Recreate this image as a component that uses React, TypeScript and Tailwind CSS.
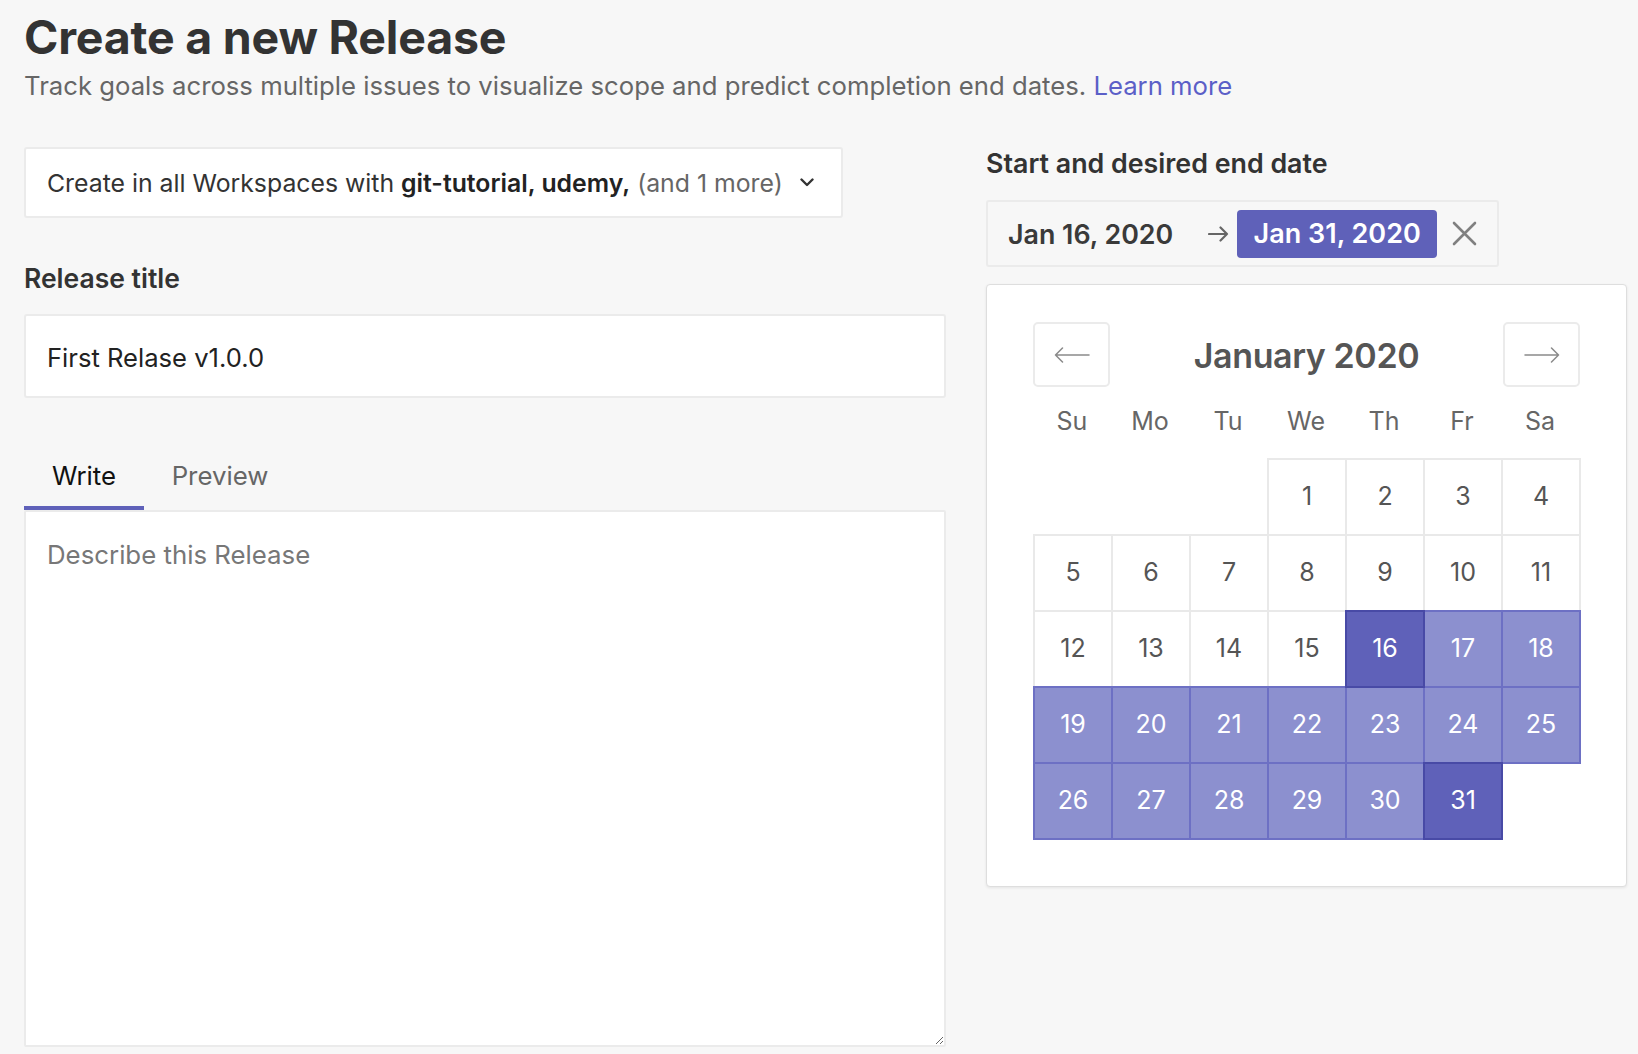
import React from "react";

const FONT = { fontFamily: "Inter, 'Noto Sans', 'Liberation Sans', sans-serif" };

function ArrowLeft() {
  return (
    <svg width="36" height="16" viewBox="0 0 36 16" fill="none">
      <path d="M35 8H1.5M8.5 1L1.5 8L8.5 15" stroke="#8a8a8a" strokeWidth="1.5" strokeLinecap="round" strokeLinejoin="round" />
    </svg>
  );
}

function ArrowRight() {
  return (
    <svg width="36" height="16" viewBox="0 0 36 16" fill="none">
      <path d="M1 8H34.5M27.5 1L34.5 8L27.5 15" stroke="#8a8a8a" strokeWidth="1.5" strokeLinecap="round" strokeLinejoin="round" />
    </svg>
  );
}

function SmallArrow() {
  return (
    <svg width="21" height="16" viewBox="0 0 21 16" fill="none">
      <path d="M1 8H19M12.5 1.5L19 8L12.5 14.5" stroke="#666" strokeWidth="2.2" strokeLinecap="round" strokeLinejoin="round" />
    </svg>
  );
}

function XIcon() {
  return (
    <svg width="25" height="25" viewBox="0 0 25 25" fill="none">
      <path d="M2 2L23 23M23 2L2 23" stroke="#808080" strokeWidth="2.6" strokeLinecap="round" />
    </svg>
  );
}

function Chevron() {
  return (
    <svg width="14" height="9" viewBox="0 0 14 9" fill="none">
      <path d="M1.5 1.5L7 7L12.5 1.5" stroke="#333" strokeWidth="2.4" strokeLinecap="round" strokeLinejoin="round" />
    </svg>
  );
}

const START = 16;
const END = 31;

function DayCell({ day }: { day: number | null }) {
  if (day === null) {
    return <div className="-ml-px -mt-px" />;
  }
  const isEdge = day === START || day === END;
  const inRange = day > START && day < END;
  let cls = "border-[#e9e9e9] bg-white text-[#555]";
  if (isEdge) cls = "z-20 border-[#484aa6] bg-[#5f61b9] text-white";
  else if (inRange) cls = "z-10 border-[#6d70c4] bg-[#8c90cf] text-white";
  return (
    <div className={`relative -ml-[2px] -mt-[2px] flex items-center justify-center border-2 text-[25px] ${cls}`}>
      {day}
    </div>
  );
}

export default function App() {
  const cells: (number | null)[] = [null, null, null];
  for (let d = 1; d <= 31; d++) cells.push(d);
  cells.push(null);

  return (
    <div className="min-h-screen bg-[#f7f7f7] pl-[24px] pt-[11px]" style={FONT}>
      <h1 className="text-[46.5px] font-bold leading-[52px] tracking-[-0.2px] text-[#333]">Create a new Release</h1>
      <p className="mt-[7px] text-[25.7px] leading-[32px] text-[#666]">
        Track goals across multiple issues to visualize scope and predict completion end dates.{" "}
        <a className="text-[#5b5fc7]">Learn more</a>
      </p>

      <div className="mt-[45px] flex gap-[40px]">
        {/* Left column */}
        <div className="flex w-[922px] flex-col">
          <div className="flex h-[71px] w-[819px] items-center rounded-[3px] border-2 border-[#ebebeb] bg-white pl-[21px] text-[24.8px] leading-[32px] text-[#333]">
            <span>
              Create in all Workspaces with <span className="font-semibold text-[#222]">git-tutorial, udemy,</span>{" "}
              <span className="text-[#666]">(and 1 more)</span>
            </span>
            <span className="ml-[17px] flex items-center">
              <Chevron />
            </span>
          </div>

          <div className="mt-[44px] text-[26.5px] font-semibold leading-[32px] text-[#333]">Release title</div>

          <input
            className="mt-[20px] h-[84px] w-[922px] rounded-[3px] border-2 border-[#ebebeb] bg-white pl-[21px] pt-[3px] text-[25.6px] text-[#222] outline-none"
            defaultValue="First Relase v1.0.0"
            style={FONT}
          />

          <div className="mt-[62px] flex">
            <div className="w-[120px] border-b-4 border-[#5f61b9] pb-[14px] text-center text-[25.8px] leading-[32px] text-[#111]">
              Write
            </div>
            <div className="w-[152px] border-b-4 border-transparent pb-[14px] text-center text-[25.8px] leading-[32px] text-[#666]">
              Preview
            </div>
          </div>

          <textarea
            className="h-[537px] w-[922px] rounded-[2px] border-2 border-[#ebebeb] bg-white px-[21px] pt-[27px] text-[25.8px] leading-[32px] text-[#222] outline-none placeholder:text-[#777]"
            placeholder="Describe this Release"
            style={FONT}
          />
        </div>

        {/* Right column */}
        <div className="flex w-[641px] flex-col">
          <div className="text-[26.8px] font-semibold leading-[32px] text-[#333]">Start and desired end date</div>

          <div className="mt-[21px] flex h-[67px] w-[513px] items-center rounded-[3px] border-2 border-[#ebebeb] pl-[20px]">
            <span className="text-[26.8px] font-semibold leading-[32px] text-[#3a3a3a]">Jan 16, 2020</span>
            <span className="ml-[35px] flex items-center">
              <SmallArrow />
            </span>
            <span className="ml-[8px] flex h-[48px] w-[200px] items-center justify-center rounded-[4px] bg-[#5f61b9] text-[27px] font-semibold leading-[32px] text-white">
              Jan 31, 2020
            </span>
            <span className="ml-[15px] flex items-center">
              <XIcon />
            </span>
          </div>

          <div className="mt-[17px] rounded-[4px] border border-[#dedede] bg-white px-[46px] pb-[46px] pt-[37px] shadow-[0_1px_3px_rgba(0,0,0,0.08)]">
            <div className="flex h-[65px] items-center justify-between">
              <button className="flex h-[65px] w-[77px] items-center justify-center rounded-[5px] border-2 border-[#ebebeb] bg-white">
                <ArrowLeft />
              </button>
              <div className="mt-[2px] text-[34px] font-semibold leading-[40px] tracking-[-0.4px] text-[#555]">January 2020</div>
              <button className="flex h-[65px] w-[77px] items-center justify-center rounded-[5px] border-2 border-[#ebebeb] bg-white">
                <ArrowRight />
              </button>
            </div>

            <div className="grid h-[71px] grid-cols-[repeat(7,78px)] items-center pb-[4px]">
              {["Su", "Mo", "Tu", "We", "Th", "Fr", "Sa"].map((d) => (
                <div key={d} className="text-center text-[25px] leading-[32px] text-[#666]">
                  {d}
                </div>
              ))}
            </div>

            <div className="grid grid-cols-[repeat(7,78px)] auto-rows-[76px] pl-[2px] pt-[2px]">
              {cells.map((d, i) => (
                <DayCell key={i} day={d} />
              ))}
            </div>
          </div>
        </div>
      </div>
    </div>
  );
}
